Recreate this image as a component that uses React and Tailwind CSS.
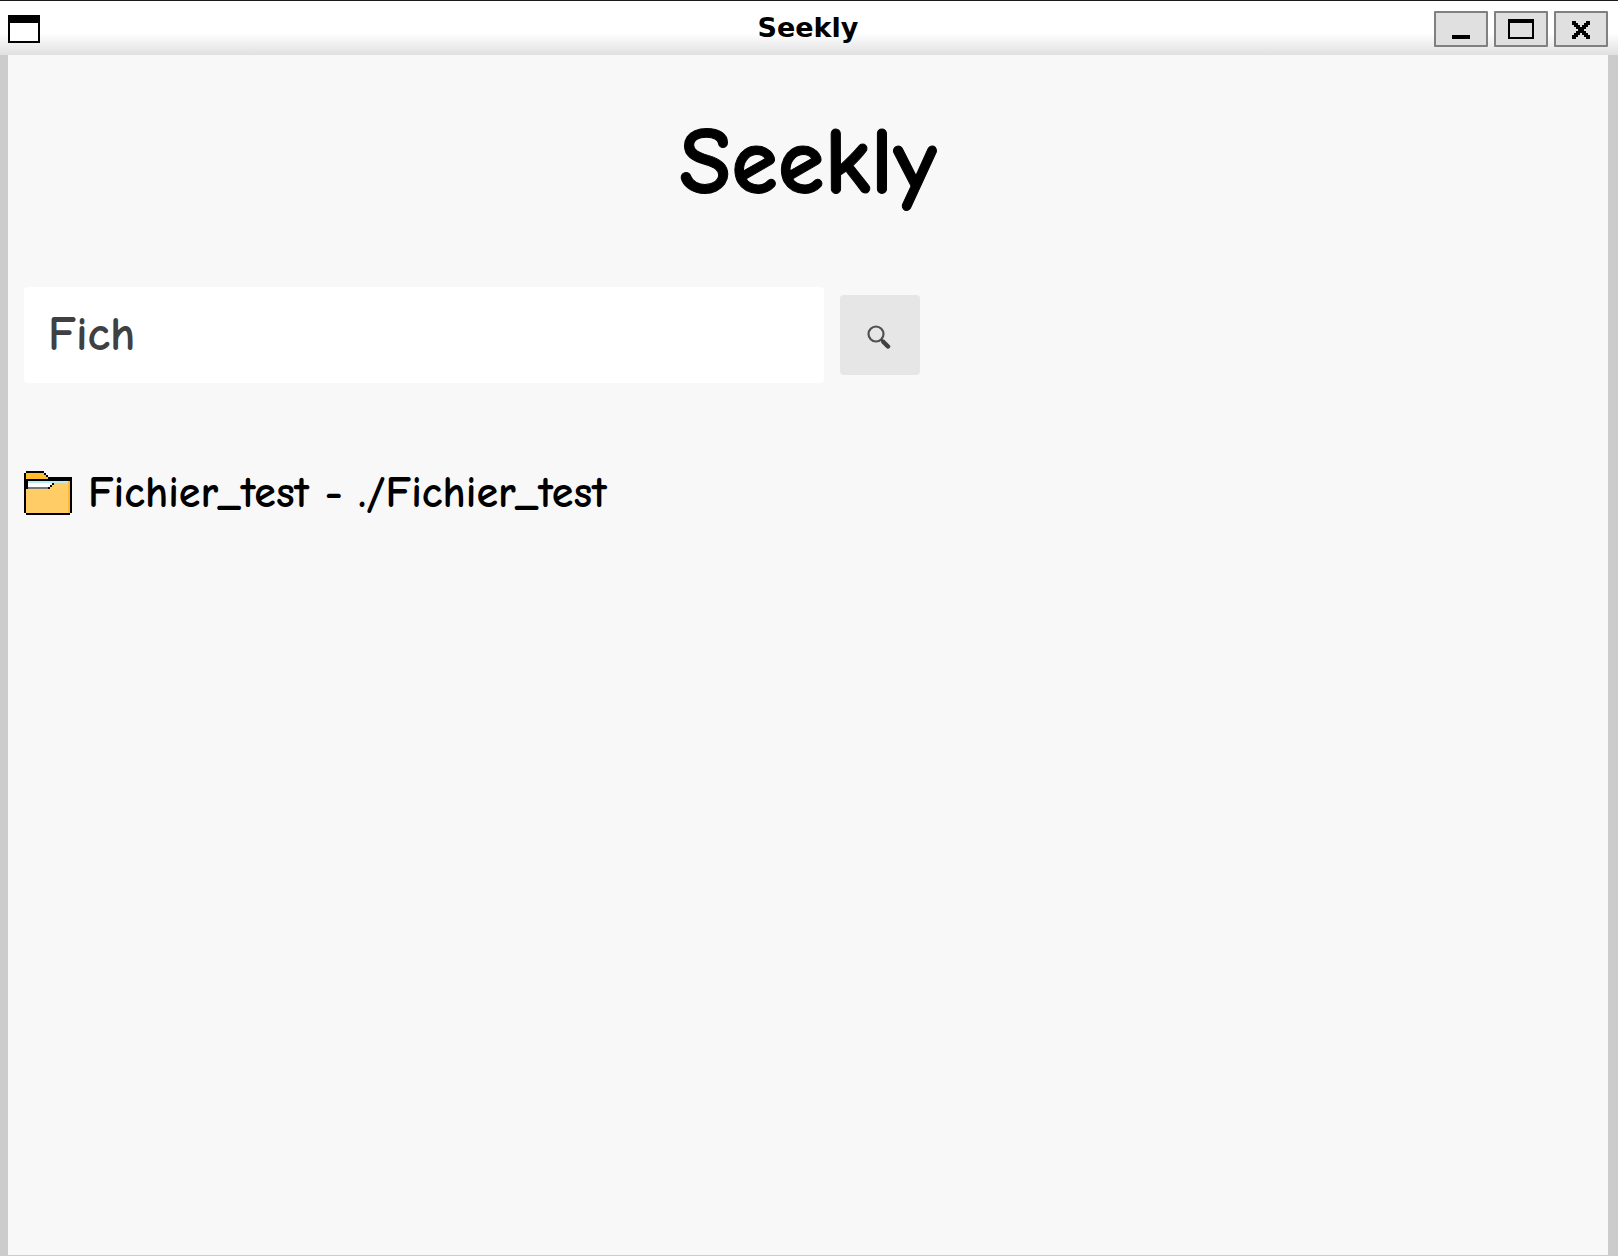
const comic = "font-['Comic_Neue','Comic_Relief','Lato',sans-serif]";

function WindowIcon() {
  return (
    <svg className="h-7 w-8" viewBox="0 0 16 14" shapeRendering="crispEdges" aria-hidden="true">
      <path d="M0 0h16v14H0z" fill="#000" />
      <path d="M1 4h14v9H1z" fill="#fff" />
    </svg>
  );
}

function FrameButton({ label, children }) {
  return (
    <button
      type="button"
      aria-label={label}
      className="h-9 w-[54px] rounded-[1px] border-2 border-[#808080] bg-[#e0e0e0]"
    >
      <svg className="h-8 w-[50px]" viewBox="0 0 25 16" shapeRendering="crispEdges" aria-hidden="true">
        {children}
      </svg>
    </button>
  );
}

function FolderIcon() {
  return (
    <svg className="h-11 w-12 shrink-0" viewBox="0 0 24 22" shapeRendering="crispEdges" aria-hidden="true">
      <path d="M1 0h9v1h1v1h1v1h12v18h-1v1H1v-1H0V1h1z" fill="#000" />
      <path d="M1 1h9v1h1v1h1v1H1z" fill="#ffbd2e" />
      <path d="M2 5h20v1H2z" fill="#b5ecf5" />
      <path d="M2 6h12v1h-1v1H2z" fill="#fff" />
      <path d="M2 8h10v1H2z" fill="#777" />
      <path d="M15 6h8v15H1V9h12V8h1V7h1z" fill="#ffcc66" />
      <path d="M22 5h1v16h-1z" fill="#ffb92e" />
    </svg>
  );
}

export default function App() {
  return (
    <div className="flex min-h-screen flex-col border-t border-[#1c1a1e] bg-[#f8f8f8]">
      <header className="grid h-[54px] grid-cols-[1fr_auto_1fr] items-center bg-linear-to-b from-white from-60% to-[#e0e0e0] pt-[2px] pr-[10px] pl-2">
        <WindowIcon />
        <div className="pb-[2px] font-['DejaVu_Sans',sans-serif] text-[27px] leading-8 font-bold text-black">Seekly</div>
        <div className="flex justify-end gap-[6px]">
          <FrameButton label="Minimize">
            <path d="M8 11h9v2H8z" />
          </FrameButton>
          <FrameButton label="Maximize">
            <path fillRule="evenodd" d="M6 3h13v10H6zM7 5v7h11V5z" />
          </FrameButton>
          <FrameButton label="Close">
            <path d="M8 4h2v1h1v1h1v1h1V6h1V5h1V4h2v2h-1v1h-1v1h-1v1h1v1h1v1h1v2h-2v-1h-1v-1h-1v-1h-1v1h-1v1h-1v1H8v-2h1v-1h1V9h1V8h-1V7H9V6H8z" />
          </FrameButton>
        </div>
      </header>
      <main className={`flex-1 border-r-[10px] border-b border-l-8 border-[#cccccc] px-4 pt-12 text-black ${comic}`}>
        <h1 className="text-center text-[95px] leading-[118px] font-bold [-webkit-text-stroke:1px]">Seekly</h1>
        <form className="mt-[66px] flex items-center gap-4" onSubmit={(e) => e.preventDefault()}>
          <input
            type="text"
            aria-label="Search"
            defaultValue="Fich"
            className="h-24 w-[800px] min-w-0 rounded bg-white px-6 pb-[2px] text-[48px] font-semibold text-[#404040] outline-none"
          />
          <button type="submit" aria-label="Search" className="flex size-20 shrink-0 items-center justify-center rounded bg-[#e6e6e6] pt-1 pr-[2px]">
            <svg className="size-6" viewBox="0 0 24 24" fill="none" aria-hidden="true">
              <circle cx="9" cy="9" r="7.5" stroke="#505050" strokeWidth="2.200" />
              <path d="M14 14.500l2 2" stroke="#404040" strokeWidth="2.500" />
              <path d="M16.500 17l4.500 4.500" stroke="#404040" strokeWidth="4.500" strokeLinecap="round" />
            </svg>
          </button>
        </form>
        <ul className="mt-20">
          <li className="flex items-center gap-4">
            <FolderIcon />
            <span className="text-[44px] leading-[60px] font-semibold">Fichier_test - ./Fichier_test</span>
          </li>
        </ul>
      </main>
    </div>
  );
}
